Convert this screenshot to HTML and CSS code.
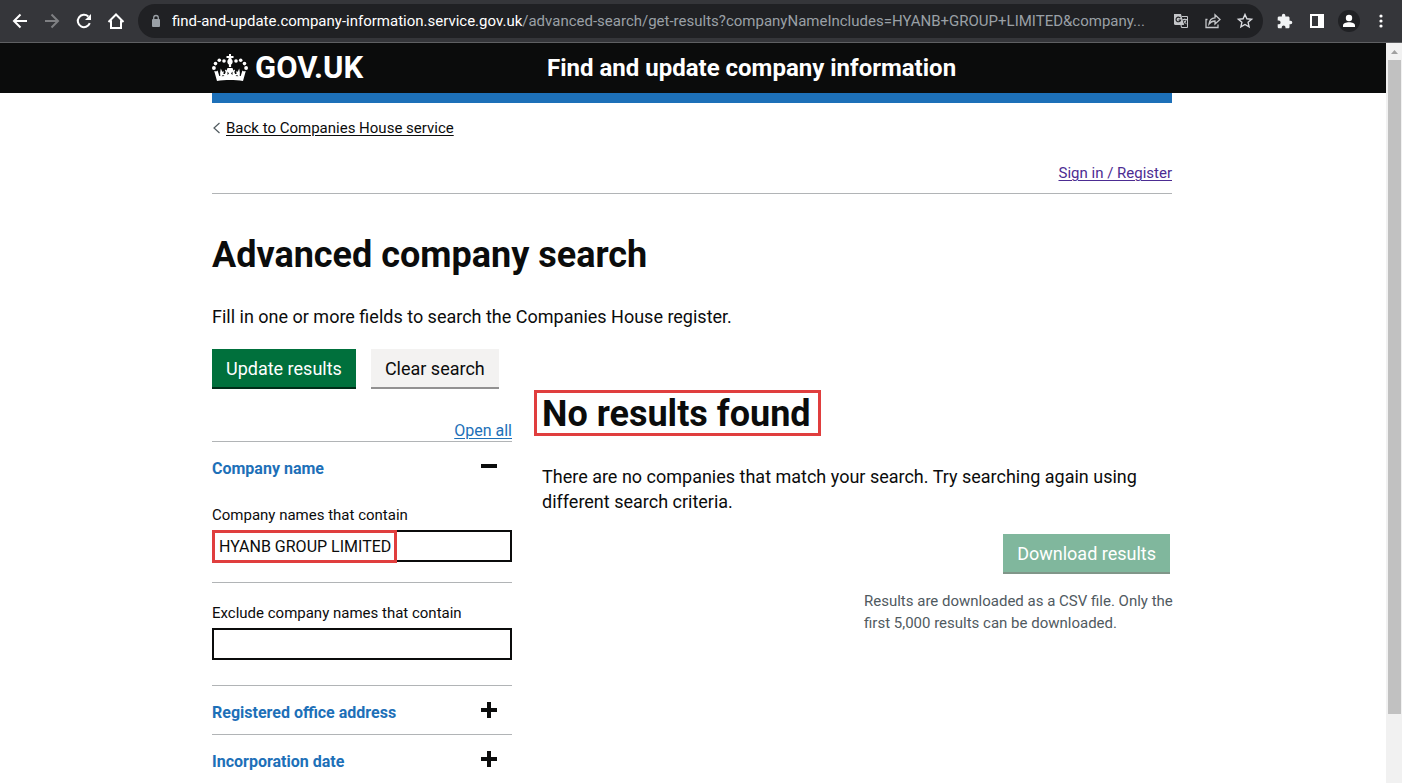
FILE: index.html
```html
<!DOCTYPE html>
<html lang="en">
<head>
<meta charset="utf-8">
<title>Advanced company search</title>
<link rel="stylesheet" href="styles.css">
</head>
<body>
<div class="toolbar">
  <button class="tool" aria-label="Back"><svg width="20" height="20" viewBox="0 0 20 20" fill="none" stroke="#fff" stroke-width="2"><path d="M17 10H4M10.500 3.500 4 10l6.500 6.500"/></svg></button>
  <button class="tool" aria-label="Forward"><svg width="20" height="20" viewBox="0 0 20 20" fill="none" stroke="#7f8083" stroke-width="2"><path d="M3 10h13M9.500 3.500 16 10l-6.500 6.500"/></svg></button>
  <button class="tool" aria-label="Reload"><svg width="20" height="20" viewBox="0 0 20 20" fill="none" stroke="#fff" stroke-width="2"><path d="M15.800 12.200A6.200 6.200 0 1 1 14.300 5.500"/><path d="M17 3v6h-6z" fill="#fff" stroke="none"/></svg></button>
  <button class="tool" aria-label="Home"><svg width="20" height="20" viewBox="0 0 20 20" fill="none" stroke="#fff" stroke-width="2"><path d="M2.500 11 10 3.500 17.500 11M5 9.500V17h10V9.500"/></svg></button>
  <div class="omnibox">
    <svg width="16" height="16" viewBox="0 0 16 16"><rect x="4" y="6" width="8" height="8" rx="1" fill="#9aa0a6"/><path d="M5.700 7V4.800a2.300 2.300 0 0 1 4.600 0V7" fill="none" stroke="#9aa0a6" stroke-width="1.300"/></svg>
    <div class="url"><span class="host">find-and-update.company-information.service.gov.uk</span>/advanced-search/get-results?companyNameIncludes=HYANB+GROUP+LIMITED&amp;company...</div>
    <button class="tool" aria-label="Translate"><svg width="18" height="18" viewBox="0 0 18 18"><path d="M2 2h7l3 11H3.500A1.500 1.500 0 0 1 2 11.500z" fill="#c4c6c9"/><path d="M10 4.500h5.500V15.500H9.500L9 13" fill="none" stroke="#c4c6c9"/><path d="M8.300 6.200A2.300 2.300 0 1 0 8.600 8H6.500" fill="none" stroke="#202124" stroke-width="1.200"/><path d="M10.500 7.500h4.500M12.800 6.500v1M14.200 7.500c-.4 2-1.500 3.500-3 4.700M11.800 8.500c.5 1.500 1.500 2.500 2.700 3.700" fill="none" stroke="#c4c6c9"/></svg></button>
    <button class="tool" aria-label="Share"><svg width="18" height="18" viewBox="0 0 18 18" fill="none" stroke="#c4c6c9" stroke-width="1.300"><path d="M3.500 7.500H2V15.500h12V12.500"/><path d="M5 12c.5-4 2.500-6 6-6.200V2.800l5 4.700-5 4.500V9c-2.500 0-4.300.8-6 3z"/></svg></button>
    <button class="tool" aria-label="Bookmark"><svg width="18" height="18" viewBox="0 0 18 18" fill="none" stroke="#dadce0" stroke-width="1.400"><path d="m9 2.500 1.900 4.300 4.700.4-3.500 3.100 1 4.600L9 12.500l-4.100 2.400 1-4.600-3.500-3.100 4.700-.4z"/></svg></button>
  </div>
  <div class="tools">
    <button class="tool" aria-label="Extensions"><svg width="16" height="16" viewBox="1 0 23 23" fill="#f1f3f4"><path d="M20.500 11H19V7c0-1.100-.9-2-2-2h-4V3.500a2.500 2.500 0 0 0-5 0V5H4c-1.100 0-2 .9-2 2v3.800h1.500a2.700 2.700 0 0 1 0 5.400H2V20c0 1.100.9 2 2 2h3.800v-1.500a2.700 2.700 0 0 1 5.400 0V22H17c1.100 0 2-.9 2-2v-4h1.500a2.500 2.500 0 0 0 0-5z"/></svg></button>
    <button class="tool" aria-label="Side panel"><svg width="18" height="18" viewBox="0 0 18 18"><path d="M2 2h14v14H2zM4 4v10h6V4z" fill="#fff" fill-rule="evenodd"/></svg></button>
    <button class="tool" aria-label="Profile"><svg width="22" height="22" viewBox="0 0 22 22"><circle cx="11" cy="11" r="11" fill="#202124"/><circle cx="11" cy="8" r="3.200" fill="#fff"/><path d="M5 17v-1.500c0-2 3-3.200 6-3.200s6 1.200 6 3.200V17z" fill="#fff"/></svg></button>
    <button class="tool" aria-label="Menu"><svg width="18" height="18" viewBox="0 0 18 18" fill="#fff"><circle cx="9" cy="4" r="1.600"/><circle cx="9" cy="9" r="1.600"/><circle cx="9" cy="14" r="1.600"/></svg></button>
  </div>
</div>
<div class="viewport">
  <div class="page">
    <header class="header">
      <div class="container header-row">
        <a class="logo" href="#"><svg width="36" height="28" viewBox="0 0 36 28" fill="#fff">
          <path d="M17 0h2v2h2.500v2H19.200c.2.700.4 1.300 1.300 2.400.6 1.800-.3 3.300-1.400 4.100V13h-2.200v-2.500c-1.100-.8-2-2.300-1.400-4.100.9-1.100 1.100-1.700 1.300-2.400H14.500V2H17z"/>
          <circle cx="12" cy="7" r="1.800"/><circle cx="7.300" cy="6.300" r="1.800"/><circle cx="3.500" cy="9.600" r="1.800"/><circle cx="1.900" cy="14" r="1.900"/>
          <circle cx="24" cy="7" r="1.800"/><circle cx="28.700" cy="6.300" r="1.800"/><circle cx="32.500" cy="9.600" r="1.800"/><circle cx="34.100" cy="14" r="1.900"/>
          <path d="M2.200 17c1.300.6 2.600.3 3.400-.6L7.300 22h1l-.2-3 .7-4.500 1.500 3.300 1.500-.5-.4 2.700h1.500l1-2.500h-.8v-2l1.500.9.900-2.400h5l.9 2.400 1.500-.9v2h-.8l1 2.500h1.500l-.4-2.700 1.500.5 1.500-3.300.7 4.500-.2 3h1l1.700-5.600c.8.900 2.100 1.200 3.400.6L31 27c-8-1.300-18-1.300-26 0z"/>
          <path d="M9.500 22.300l1.500-1.300 1.500 1zM23.500 22l1.500-1 1.500 1.300zM15.500 17.500l1.500 2-1.500 1.500zM20.500 17.500l-1.500 2 1.500 1.500z" fill="#0b0c0c"/>
        </svg><span>GOV.UK</span></a>
        <a class="service" href="#">Find and update company information</a>
      </div>
    </header>
    <div class="container">
      <div class="bluebar"></div>
      <a class="back" href="#"><svg width="9" height="12" viewBox="0 0 9 12" fill="none" stroke="#505a5f" stroke-width="1.200"><path d="M7.500 1 2 6l5.500 5"/></svg><span>Back to Companies House service</span></a>
      <nav class="account"><a href="#">Sign in / Register</a></nav>
      <main>
        <h1>Advanced company search</h1>
        <p class="lead">Fill in one or more fields to search the Companies House register.</p>
        <div class="columns">
          <form class="filters">
            <div class="actions">
              <button type="button" class="btn primary">Update results</button>
              <button type="button" class="btn secondary">Clear search</button>
            </div>
            <div class="openall"><button type="button">Open all</button></div>
            <section class="section">
              <button type="button" class="section-head"><span>Company name</span><i class="sign"></i></button>
              <div class="field">
                <label for="inc">Company names that contain</label>
                <div class="inputwrap"><input id="inc" type="text" value="HYANB GROUP LIMITED"><span class="mark"></span></div>
              </div>
              <div class="field second">
                <label for="exc">Exclude company names that contain</label>
                <div class="inputwrap"><input id="exc" type="text"></div>
              </div>
            </section>
            <section class="section"><button type="button" class="section-head"><span>Registered office address</span><i class="sign plus"></i></button></section>
            <section class="section"><button type="button" class="section-head"><span>Incorporation date</span><i class="sign plus"></i></button></section>
          </form>
          <div class="results">
            <h2>No results found</h2>
            <p class="message">There are no companies that match your search. Try searching again using different search criteria.</p>
            <div class="download">
              <button type="button" class="btn disabled" disabled>Download results</button>
              <p class="hint">Results are downloaded as a CSV file. Only the first 5,000 results can be downloaded.</p>
            </div>
          </div>
        </div>
      </main>
    </div>
  </div>
  <div class="scrollbar"><svg width="16" height="17" viewBox="0 0 16 17"><path d="M5 11l3.500-4 3.500 4z" fill="#a0a0a0"/></svg><div class="thumb"></div></div>
</div>
</body>
</html>
```
FILE: styles.css
```css
* { box-sizing: border-box; }
body { margin: 0; height: 100vh; display: flex; flex-direction: column; overflow: hidden; background: #fff; color: #0b0c0c; font-family: Roboto, "Liberation Sans", sans-serif; font-size: 16px; line-height: 20px; }
button { font: inherit; border: 0; background: none; padding: 0; color: inherit; }
h1, h2, p { margin: 0; }
svg { display: block; flex: none; }

.toolbar { flex: none; display: flex; align-items: center; gap: 12px; height: 43px; padding: 0 5px 0 10px; background: #35363a; border-bottom: 1px solid #5f6063; }
.tool { flex: none; display: flex; }
.omnibox { flex: 1; min-width: 0; display: flex; align-items: center; gap: 14px; height: 34px; margin-right: -6px; padding: 0 9px 0 10px; border-radius: 17px; background: #202124; }
.url { flex: 1; min-width: 0; margin-left: -6px; overflow: hidden; white-space: nowrap; font-size: 15px; color: #9aa0a6; }
.host { color: #fff; }
.tools { flex: none; display: grid; grid-template-columns: repeat(4, 32px); place-items: center; }

.viewport { flex: 1; min-height: 0; display: flex; }
.page { flex: 1; min-width: 0; overflow: hidden; }
.scrollbar { flex: none; width: 16px; padding-left: 2px; display: flex; flex-direction: column; background: #f1f1f1; }
.scrollbar svg { margin-left: -2px; }
.thumb { height: 90%; flex: none; max-height: 654px; width: 13px; background: #c1c1c1; }

.container { max-width: 960px; margin: 0 auto; position: relative; left: -1px; }
.header { background: #0b0c0c; }
.header-row { display: flex; align-items: center; height: 50px; }
.header a { color: #fff; text-decoration: none; font-weight: 700; }
.logo { flex: 0 0 335px; display: flex; align-items: center; gap: 7px; font-size: 31px; }
.service { font-size: 24px; }
.bluebar { height: 10px; background: #1d70b8; }

.back { display: flex; align-items: center; gap: 5px; margin-top: 15px; color: #0b0c0c; font-size: 15px; text-decoration: none; }
.back span { text-decoration: underline; }
.account { display: flex; justify-content: flex-end; margin-top: 25px; padding-bottom: 10px; border-bottom: 1px solid #b1b4b6; font-size: 15px; }
.account a { color: #4c2c92; }
a, .openall button { text-underline-offset: 2px; text-decoration-thickness: 1px; }

h1 { margin-top: 41px; font-size: 36px; line-height: 40px; }
.lead { margin-top: 29px; font-size: 18px; line-height: 25px; }
.columns { display: flex; gap: 30px; margin-top: 20px; }
.filters { flex: 0 0 300px; }
.results { flex: 1; min-width: 0; padding-top: 41px; }
.actions { display: flex; gap: 15px; white-space: nowrap; }
.btn { height: 40px; padding: 0 14px; font-size: 18px; line-height: 36px; }
.primary { background: #00703c; color: #fff; box-shadow: inset 0 -2px #002d18; }
.secondary { background: #f3f2f1; box-shadow: inset 0 -2px #929191; }
.disabled { background: #80b79d; color: #fff; box-shadow: inset 0 -2px #809689; }
.openall { display: flex; justify-content: flex-end; margin-top: 32px; }
.openall button { color: #1d70b8; text-decoration: underline; }
.section { border-top: 1px solid #b1b4b6; }
.section-head { display: flex; align-items: center; justify-content: space-between; width: 100%; height: 48px; padding: 6px 15px 0 0; font-weight: 700; color: #1d70b8; }
.sign { width: 16px; height: 16px; margin-bottom: 6px; background: linear-gradient(#0b0c0c, #0b0c0c) center / 16px 4px no-repeat; }
.plus { background: linear-gradient(#0b0c0c, #0b0c0c) center / 16px 4px no-repeat, linear-gradient(#0b0c0c, #0b0c0c) center / 4px 16px no-repeat; }
.field { padding: 15px 0 20px; }
.field label { display: block; font-size: 15px; }
.second { border-top: 1px solid #b1b4b6; padding: 20px 0 25px; }
.inputwrap { position: relative; margin-top: 5px; }
input { display: block; width: 100%; height: 32px; padding: 0 5px; border: 2px solid #0b0c0c; border-radius: 0; background: #fff; color: #0b0c0c; font: inherit; }
.mark { position: absolute; top: 0; left: 0; width: 185px; height: 33px; border: 3px solid #e03e3e; }

h2 { width: fit-content; margin-left: -8px; padding: 2px 7px 0 5px; border: 3px solid #e03e3e; font-size: 36px; line-height: 38px; }
.message { margin-top: 28px; font-size: 18px; line-height: 25px; }
.download { width: 320px; margin: 20px -12px 0 auto; display: flex; flex-direction: column; }
.download .btn { align-self: flex-end; margin-right: 14px; }
.hint { margin-top: 16px; font-size: 15px; line-height: 22px; color: #505a5f; }
```
